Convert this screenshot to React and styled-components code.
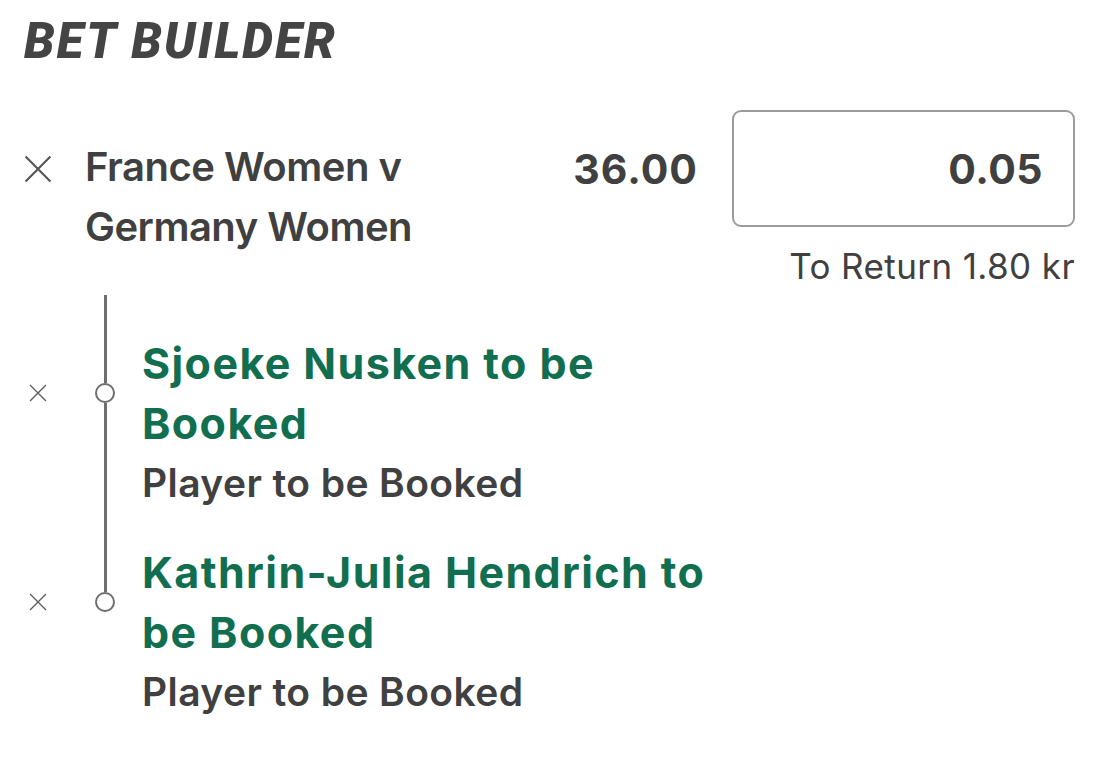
import React from "react";
import styled, { createGlobalStyle } from "styled-components";

const GlobalStyle = createGlobalStyle`
  html, body {
    margin: 0;
    padding: 0;
    background: #ffffff;
  }
  body {
    font-family: Inter, "Noto Sans", Roboto, sans-serif;
    color: #404040;
    -webkit-font-smoothing: antialiased;
  }
`;

const INK = "#404040";
const GREEN = "#116e4f";
const RAIL = "#6e6e6e";

const Slip = styled.div`
  width: 1101px;
  box-sizing: border-box;
  padding: 18px 26px 0 24px;
`;

const Heading = styled.h1`
  margin: 0;
  font-family: Roboto, "Liberation Sans", sans-serif;
  font-weight: 900;
  font-style: italic;
  font-size: 49px;
  line-height: 48px;
  letter-spacing: 2.2px;
  color: #444444;
`;

const SelectionRow = styled.div`
  margin-top: 44px;
  display: grid;
  grid-template-columns: 61px 1fr auto 343px;
  align-items: start;
`;

const RemoveSlot = styled.div`
  margin-top: 27px;
  height: 64px;
  display: flex;
  align-items: center;
  justify-content: flex-start;
`;

const EventName = styled.div`
  padding-top: 27px;
  font-size: 40px;
  font-weight: 600;
  line-height: 60px;
  letter-spacing: -0.5px;
  color: ${INK};
  max-width: 420px;
`;

const Odds = styled.div`
  height: 117px;
  display: flex;
  align-items: center;
  margin-right: 34px;
  font-size: 41px;
  font-weight: 700;
  letter-spacing: 1px;
  color: ${INK};
`;

const StakeColumn = styled.div`
  display: flex;
  flex-direction: column;
  align-items: flex-end;
`;

const StakeBox = styled.div`
  width: 100%;
  height: 117px;
  box-sizing: border-box;
  border: 2px solid #9c9c9c;
  border-radius: 9px;
  display: flex;
  align-items: center;
  justify-content: flex-end;
  padding-right: 30px;
  font-size: 41px;
  font-weight: 700;
  letter-spacing: 0.5px;
  color: ${INK};
`;

const ToReturn = styled.div`
  margin-top: 19px;
  font-size: 35px;
  font-weight: 400;
  line-height: 40px;
  letter-spacing: 0.4px;
  color: ${INK};
`;

const Legs = styled.div`
  margin-top: 9px;
  display: flex;
  flex-direction: column;
`;

const Leg = styled.div`
  display: flex;
  align-items: stretch;
`;

const LegRemove = styled.div`
  width: 28px;
  height: 20px;
  margin-top: ${(p) => p.$lead + 50}px;
  display: flex;
  align-items: center;
  justify-content: center;
`;

const Rail = styled.div`
  width: 20px;
  margin-left: 43px;
  display: flex;
  flex-direction: column;
  align-items: center;
`;

const RailLine = styled.div`
  width: 3px;
  background: ${RAIL};
  flex: ${(p) => (p.$grow ? "1" : "none")};
  height: ${(p) => (p.$grow ? "auto" : `${p.$h}px`)};
  visibility: ${(p) => (p.$hidden ? "hidden" : "visible")};
`;

const Dot = styled.div`
  width: 20px;
  height: 20px;
  box-sizing: border-box;
  border: 2.5px solid ${RAIL};
  border-radius: 50%;
  background: #ffffff;
`;

const LegBody = styled.div`
  margin-left: 27px;
  width: 590px;
  padding-top: ${(p) => p.$lead}px;
  padding-bottom: ${(p) => (p.$last ? 0 : 29)}px;
`;

const LegTitle = styled.div`
  font-size: 43px;
  font-weight: 700;
  line-height: 60px;
  letter-spacing: 1.4px;
  color: ${GREEN};
`;

const LegMarket = styled.div`
  font-size: 39px;
  font-weight: 600;
  line-height: 60px;
  letter-spacing: 0.4px;
  color: ${INK};
`;

const Cross = ({ size, stroke, color = "#555555" }) => (
  <svg width={size} height={size} viewBox="0 0 24 24" aria-hidden="true">
    <path
      d="M2 2 L22 22 M22 2 L2 22"
      stroke={color}
      strokeWidth={stroke}
      strokeLinecap="square"
      fill="none"
    />
  </svg>
);

const legs = [
  { title: "Sjoeke Nusken to be Booked", market: "Player to be Booked" },
  { title: "Kathrin-Julia Hendrich to be Booked", market: "Player to be Booked" },
];

export default function App() {
  return (
    <>
      <GlobalStyle />
      <Slip>
        <Heading>BET BUILDER</Heading>
        <SelectionRow>
          <RemoveSlot>
            <Cross size={28} stroke={1.8} />
          </RemoveSlot>
          <EventName>
            France Women v<br />
            Germany Women
          </EventName>
          <Odds>36.00</Odds>
          <StakeColumn>
            <StakeBox>0.05</StakeBox>
            <ToReturn>To Return 1.80 kr</ToReturn>
          </StakeColumn>
        </SelectionRow>
        <Legs>
          {legs.map((leg, i) => {
            const lead = i === 0 ? 38 : 0;
            const last = i === legs.length - 1;
            return (
              <Leg key={leg.title}>
                <LegRemove $lead={lead}>
                  <Cross size={18} stroke={1.7} color="#5a5a5a" />
                </LegRemove>
                <Rail>
                  <RailLine $h={lead + 50} />
                  <Dot />
                  <RailLine $grow $hidden={last} />
                </Rail>
                <LegBody $lead={lead} $last={last}>
                  <LegTitle>{leg.title}</LegTitle>
                  <LegMarket>{leg.market}</LegMarket>
                </LegBody>
              </Leg>
            );
          })}
        </Legs>
      </Slip>
    </>
  );
}
